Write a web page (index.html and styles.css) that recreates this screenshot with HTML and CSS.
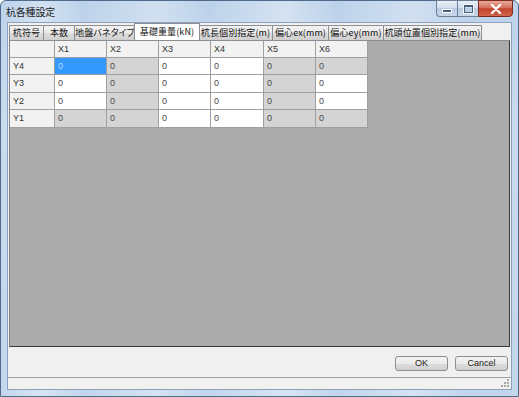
FILE: index.html
```html
<!DOCTYPE html>
<html lang="ja">
<head>
<meta charset="utf-8">
<title>杭各種設定</title>
<link rel="stylesheet" href="styles.css">
</head>
<body>
<div class="window">
  <div class="titlebar">
    <span class="title">杭各種設定</span>
    <div class="controls">
      <div class="cbtn cmin"><span class="minbar"></span></div>
      <div class="cbtn cmax"><span class="maxbox"></span></div>
      <div class="cbtn cclose">
        <svg width="12" height="10" viewBox="0 0 12 10"><path d="M2 1 L10 9 M10 1 L2 9" stroke="#fff" stroke-width="2.4" stroke-linecap="round"/></svg>
      </div>
    </div>
  </div>
  <div class="client">
    <div class="tabs">
      <div class="tab w1">杭符号</div>
      <div class="tab w2">本数</div>
      <div class="tab w3">地盤バネタイプ</div>
      <div class="tab w4 active">基礎重量(kN)</div>
      <div class="tab w5">杭長個別指定(m)</div>
      <div class="tab w6">偏心ex(mm)</div>
      <div class="tab w7">偏心ey(mm)</div>
      <div class="tab w8">杭頭位置個別指定(mm)</div>
    </div>
    <div class="panel">
      <div class="grid">
        <div class="hd"></div>
        <div class="hd">X1</div><div class="hd">X2</div><div class="hd">X3</div><div class="hd">X4</div><div class="hd">X5</div><div class="hd">X6</div>

        <div class="hd rh">Y4</div>
        <div class="c sel">0</div><div class="c g">0</div><div class="c">0</div><div class="c">0</div><div class="c g">0</div><div class="c g">0</div>

        <div class="hd rh">Y3</div>
        <div class="c">0</div><div class="c g">0</div><div class="c">0</div><div class="c">0</div><div class="c g">0</div><div class="c">0</div>

        <div class="hd rh">Y2</div>
        <div class="c">0</div><div class="c g">0</div><div class="c">0</div><div class="c">0</div><div class="c g">0</div><div class="c">0</div>

        <div class="hd rh">Y1</div>
        <div class="c g">0</div><div class="c g">0</div><div class="c">0</div><div class="c">0</div><div class="c g">0</div><div class="c g">0</div>
      </div>
    </div>
    <div class="buttons">
      <div class="btn">OK</div>
      <div class="btn">Cancel</div>
    </div>
    <div class="status">
      <svg class="grip" width="8" height="8" viewBox="0 0 8 8">
        <g fill="#a9a9a9">
          <rect x="6" y="0" width="2" height="2"/>
          <rect x="3" y="3" width="2" height="2"/><rect x="6" y="3" width="2" height="2"/>
          <rect x="0" y="6" width="2" height="2"/><rect x="3" y="6" width="2" height="2"/><rect x="6" y="6" width="2" height="2"/>
        </g>
      </svg>
    </div>
  </div>
</div>
</body>
</html>
```

FILE: styles.css
```css
html, body {
  margin: 0;
  padding: 0;
  width: 519px;
  height: 397px;
  overflow: hidden;
  background: #ffffff;
  font-family: "Noto Sans CJK JP", "Liberation Sans", sans-serif;
}

.window {
  width: 519px;
  height: 397px;
  box-sizing: border-box;
  border: 1px solid #4f6b8c;
  border-radius: 6px 6px 0 0;
  background:
    linear-gradient(90deg, rgba(255,255,255,0) 0%, rgba(255,255,255,0.35) 8%, rgba(255,255,255,0) 16%, rgba(255,255,255,0.3) 30%, rgba(255,255,255,0) 40%, rgba(255,255,255,0.35) 55%, rgba(255,255,255,0) 65%, rgba(255,255,255,0.3) 80%, rgba(255,255,255,0) 90%),
    linear-gradient(180deg, #bcd2ea 0%, #c9dbef 30%, #c2d6ec 100%);
  display: flex;
  flex-direction: column;
}

.titlebar {
  height: 21px;
  display: flex;
  justify-content: space-between;
  align-items: flex-start;
  flex: none;
}

.title {
  font-size: 10px;
  line-height: 12px;
  color: #1a1a1a;
  margin: 5px 0 0 5px;
  letter-spacing: -0.2px;
}

.controls {
  display: flex;
  margin-right: 5px;
  margin-top: -1px;
}

.cbtn {
  height: 17px;
  box-sizing: border-box;
  border: 1px solid #6d7f96;
  display: flex;
  align-items: center;
  justify-content: center;
}

.cmin, .cmax {
  width: 21px;
  background: linear-gradient(180deg, #e6eef7 0%, #d2dfee 45%, #b9cbe0 50%, #c9d8ea 100%);
}

.cmin {
  border-radius: 0 0 0 4px;
  border-right: none;
}

.cmax {
  border-right: none;
}

.minbar {
  width: 8px;
  height: 2px;
  background: #4a5d76;
  border: 1px solid #fff;
  margin-top: 5px;
}

.maxbox {
  width: 7px;
  height: 5px;
  border: 1px solid #4a5d76;
  border-top-width: 2px;
  outline: 1px solid #f4f8fc;
}

.cclose {
  width: 35px;
  border-radius: 0 0 4px 0;
  border-color: #7b2a22;
  background: linear-gradient(180deg, #e9a99b 0%, #d6705c 45%, #c2432d 52%, #d2654a 100%);
}

.client {
  flex: 1;
  margin: 0 6px 6px 6px;
  background: #f0f0f0;
  border: 1px solid #8ba1bd;
  display: flex;
  flex-direction: column;
}

.tabs {
  display: flex;
  height: 16px;
  margin-top: 1px;
  padding-left: 1px;
  align-items: flex-end;
  flex: none;
}

.tab {
  height: 15px;
  box-sizing: border-box;
  border: 1px solid #8c8e94;
  border-right: none;
  border-bottom: none;
  border-radius: 1px 1px 0 0;
  background: linear-gradient(180deg, #f2f2f2 0%, #ebebeb 50%, #dddddd 51%, #cfcfcf 100%);
  font-size: 9px;
  line-height: 13px;
  color: #111;
  text-align: center;
  white-space: nowrap;
  overflow: visible;
  font-feature-settings: "palt";
  letter-spacing: 0.1px;
}

.tab.w1 { width: 34px; }
.tab.w2 { width: 31px; }
.tab.w3 { width: 61px; }
.tab.w4 { width: 64px; }
.tab.w5 { width: 73px; }
.tab.w6 { width: 56px; }
.tab.w7 { width: 55px; }
.tab.w8 { width: 99px; border-right: 1px solid #8c8e94; }

.tab.active {
  height: 17px;
  background: #ffffff;
  border-right: 1px solid #8c8e94;
  margin: 0 -1px 0 -1px;
  width: 66px;
  position: relative;
  z-index: 1;
  line-height: 15px;
}

.tab.active + .tab {
  border-left: none;
}

.panel {
  margin: 0 1px 0 1px;
  background: #ababab;
  border: 1px solid #828790;
  border-right: 1px solid #3a3a3a;
  border-bottom: 1px solid #3a3a3a;
  border-top-color: #8c8e94;
  height: 307px;
  flex: none;
  box-sizing: border-box;
}

.grid {
  display: grid;
  grid-template-columns: 45px 52px 52px 52px 53px 52px 52px;
  grid-template-rows: 17px 17px 18px 17px 18px;
  width: max-content;
}

.grid > div {
  box-sizing: border-box;
  border-right: 1px solid #a0a0a0;
  border-bottom: 1px solid #a0a0a0;
  font-size: 9px;
  line-height: 16px;
  padding-left: 3px;
  font-family: "Liberation Sans", "Noto Sans CJK JP", sans-serif;
  color: #4a4a4a;
}

.grid .hd {
  background: #f2f2f2;
  color: #333;
}

.grid .c {
  background: #ffffff;
}

.grid .c.g {
  background: #d4d4d4;
}

.grid .c.sel {
  background: #3399ff;
  color: #b9dcff;
}

.buttons {
  display: flex;
  justify-content: flex-end;
  gap: 7px;
  padding: 9px 3px 0 0;
  height: 27px;
  box-sizing: border-box;
  flex: none;
}

.btn {
  width: 53px;
  height: 15px;
  box-sizing: border-box;
  border: 1px solid #8e8f8f;
  border-radius: 3px;
  background: linear-gradient(180deg, #f2f2f2 0%, #ebebeb 50%, #dddddd 51%, #cfcfcf 100%);
  font-size: 9px;
  line-height: 13px;
  text-align: center;
  color: #222;
  font-family: "Liberation Sans", sans-serif;
}

.status {
  flex: 1;
  border-top: 1px solid #a0a0a0;
  margin-top: 3px;
  background: #f3f0f0;
  display: flex;
  justify-content: flex-end;
  align-items: flex-end;
  padding: 0 2px 2px 0;
  box-sizing: border-box;
}
```
